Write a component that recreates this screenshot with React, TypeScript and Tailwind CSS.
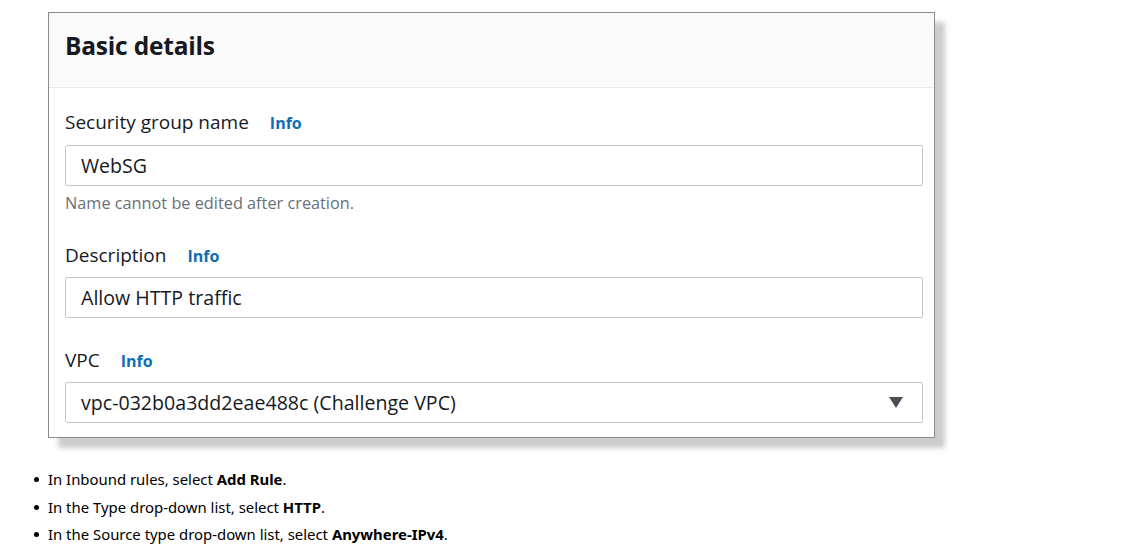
import React from "react";

function Label({ text }: { text: string }) {
  return (
    <div className="flex items-baseline h-[24px] leading-[24px]">
      <span className="text-[19px] text-[#16191f]">{text}</span>
      <span className="ml-[21px] text-[16px] font-bold text-[#0f6db3]">Info</span>
    </div>
  );
}

function Input({ value, select }: { value: string; select?: boolean }) {
  return (
    <div className="h-[41px] border border-[#c4c8cc] rounded-[2px] flex items-center pl-[15px] pr-[18px] bg-white">
      <span className="text-[19.6px] text-[#16191f] flex-1">{value}</span>
      {select && (
        <svg width="14" height="11" viewBox="0 0 14 11" className="mr-[1px]">
          <polygon points="0,0 14,0 7,11" fill="#4a4f57" />
        </svg>
      )}
    </div>
  );
}

export default function App() {
  return (
    <div className="w-[1122px] h-[547px] bg-white overflow-hidden" style={{ fontFamily: '"Open Sans", "Noto Sans", sans-serif' }}>
      <div className="pt-[12px] pl-[48px]">
        <div className="w-[887px] h-[426px] border border-[#8a8a8a] bg-white shadow-[10px_10px_5px_rgba(0,0,0,0.2)] flex flex-col">
          <div className="h-[75px] bg-[#fafafa] border-b border-[#eaeaea] flex items-center pl-[16px] pb-[8px]">
            <span className="text-[24.5px] font-bold text-[#16191f] tracking-[-0.2px]">Basic details</span>
          </div>
          <div className="pl-[16px] pr-[11px] pt-[22px] flex flex-col">
            <Label text="Security group name" />
            <div className="mt-[11px]">
              <Input value="WebSG" />
            </div>
            <div className="mt-[8px] h-[18px] leading-[18px] text-[16.3px] text-[#687078]">Name cannot be edited after creation.</div>
            <div className="mt-[31px]">
              <Label text="Description" />
            </div>
            <div className="mt-[10px]">
              <Input value="Allow HTTP traffic" />
            </div>
            <div className="mt-[30px]">
              <Label text="VPC" />
            </div>
            <div className="mt-[10px]">
              <Input value="vpc-032b0a3dd2eae488c (Challenge VPC)" select />
            </div>
          </div>
        </div>
      </div>
      <ul className="mt-[28px] pl-[48px] text-[14.9px] text-black leading-[27.5px]" style={{ fontFamily: '"Noto Sans", "Open Sans", sans-serif' }}>
        {[
          ["In Inbound rules, select ", "Add Rule"],
          ["In the Type drop-down list, select ", "HTTP"],
          ["In the Source type drop-down list, select ", "Anywhere-IPv4"],
        ].map(([a, b]) => (
          <li key={b} className="relative">
            <span className="absolute left-[-14px] top-[11px] w-[5px] h-[5px] rounded-full bg-black" />
            {a}
            <b className="font-bold">{b}</b>.
          </li>
        ))}
      </ul>
    </div>
  );
}
